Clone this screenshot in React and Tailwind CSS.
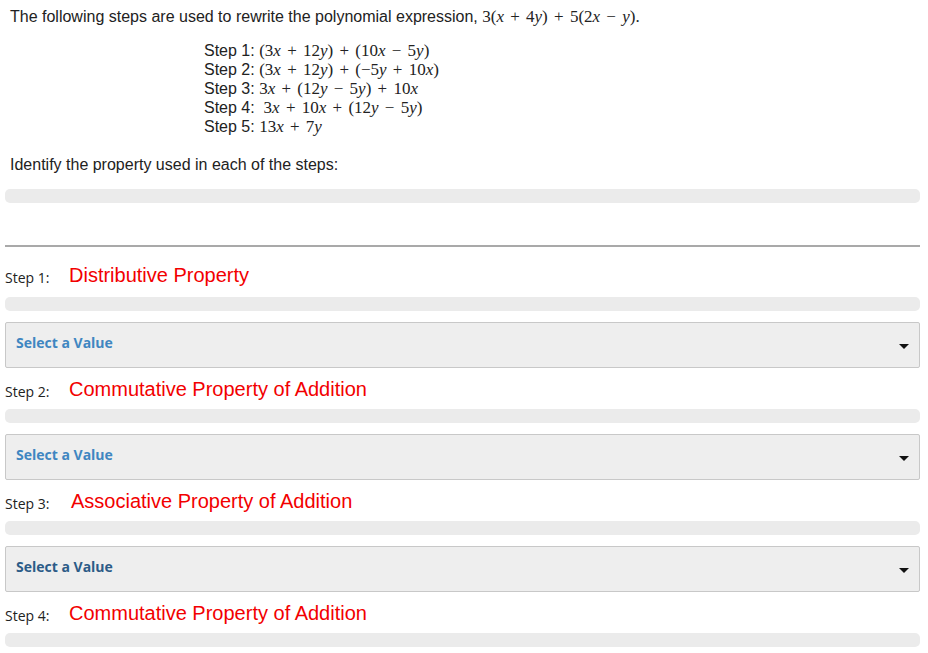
import React from 'react';

const V = ({ children }) => <i>{children}</i>;

// operator with a bit of extra room, like a math font sets it
const Op = ({ children }) => <span className="mx-[2px]"> {children} </span>;

const Math = ({ children }) => (
    <span className="font-['Liberation_Serif',serif] text-[17px]">{children}</span>
);

const steps = [
    { label: 'Step 1:', answer: 'Distributive Property', color: 'text-[#3f86c1]', indent: 'ml-[19px]', top: 'mt-[15px]', bar: 'mt-[9px]' },
    { label: 'Step 2:', answer: 'Commutative Property of Addition', color: 'text-[#3f86c1]', indent: 'ml-[19px]', top: 'mt-[8px]', bar: 'mt-[7px]' },
    { label: 'Step 3:', answer: 'Associative Property of Addition', color: 'text-[#2c5b87]', indent: 'ml-[21px]', top: 'mt-[8px]', bar: 'mt-[7px]' },
    { label: 'Step 4:', answer: 'Commutative Property of Addition', color: null, indent: 'ml-[19px]', top: 'mt-[8px]', bar: 'mt-[7px]' },
];

const Bar = ({ className = '' }) => (
    <div className={`h-[14px] rounded-[5px] bg-[#ebebeb] ${className}`} />
);

const SelectBox = ({ color }) => (
    <div className="mt-[11px] h-[46px] border border-[#c8c8c8] bg-[#eeeeee] rounded-[2px] flex items-center justify-between pl-[10px] pr-[10px]">
        <span className={`font-['Open_Sans',sans-serif] font-bold text-[14px] -mt-[5px] ${color}`}>Select a Value</span>
        <svg width="10" height="6" viewBox="0 0 10 6" className="mt-[3px]">
            <path d="M0 0 L10 0 L5 5 Z" fill="#111" />
        </svg>
    </div>
);

const App = () => {
    return (
        <div className="w-[928px] h-[653px] overflow-hidden bg-white text-[#222] font-['Liberation_Sans',Arial,sans-serif]">
            <div className="pl-[10px] pt-[7px] text-[16px] leading-[20px]">
                The following steps are used to rewrite the polynomial expression,{' '}
                <Math>3(<V>x</V><Op>+</Op>4<V>y</V>)<Op>+</Op>5(2<V>x</V><Op>−</Op><V>y</V>).</Math>
            </div>

            <div className="pl-[204px] pt-[14px] text-[16px] leading-[19px] flex flex-col">
                <div>Step 1: <Math>(3<V>x</V><Op>+</Op>12<V>y</V>)<Op>+</Op>(10<V>x</V><Op>−</Op>5<V>y</V>)</Math></div>
                <div>Step 2: <Math>(3<V>x</V><Op>+</Op>12<V>y</V>)<Op>+</Op>(−5<V>y</V><Op>+</Op>10<V>x</V>)</Math></div>
                <div>Step 3: <Math>3<V>x</V><Op>+</Op>(12<V>y</V><Op>−</Op>5<V>y</V>)<Op>+</Op>10<V>x</V></Math></div>
                <div>Step 4: &nbsp;<Math>3<V>x</V><Op>+</Op>10<V>x</V><Op>+</Op>(12<V>y</V><Op>−</Op>5<V>y</V>)</Math></div>
                <div>Step 5: <Math>13<V>x</V><Op>+</Op>7<V>y</V></Math></div>
            </div>

            <div className="pl-[10px] pt-[19px] text-[16px] leading-[20px]">
                Identify the property used in each of the steps:
            </div>

            <div className="px-[5px] w-[925px]">
                <Bar className="mt-[14px]" />
                <div className="mt-[42px] h-[2px] bg-[#a9a9a9]" />

                {steps.map((s) => (
                    <div key={s.label}>
                        <div className={`flex items-center h-[26px] ${s.top}`}>
                            <span className="font-['Open_Sans',sans-serif] text-[14px] text-[#222] w-[45px] mt-[4px]">{s.label}</span>
                            <span className={`text-[#f20000] text-[20px] ${s.indent}`}>{s.answer}</span>
                        </div>
                        <Bar className={s.bar} />
                        {s.color && <SelectBox color={s.color} />}
                    </div>
                ))}
            </div>
        </div>
    );
};

export default App;
